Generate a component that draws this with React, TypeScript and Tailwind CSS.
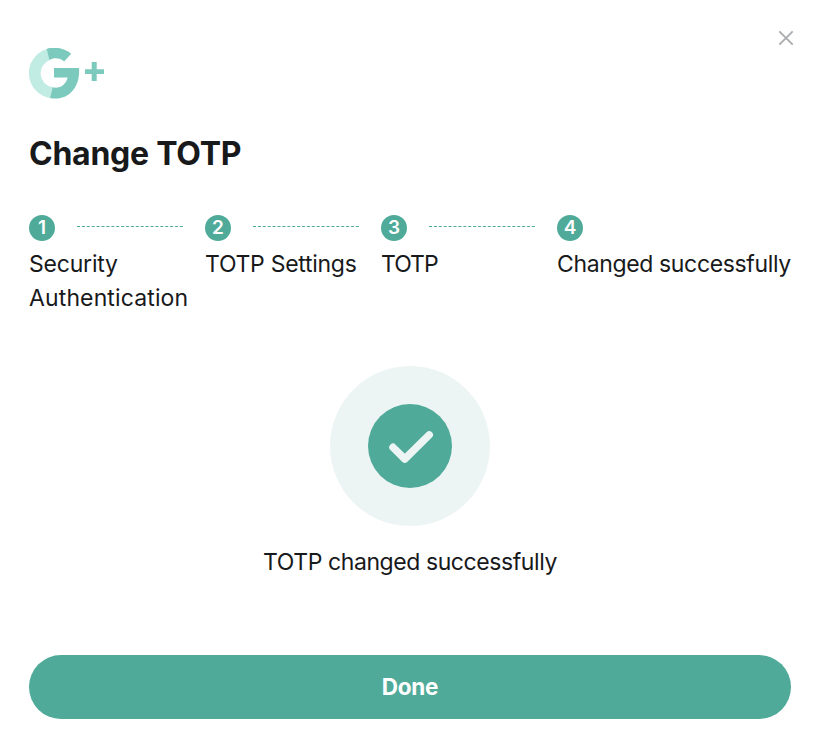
const steps = [
  { lines: [{ text: 'Security', spacing: 'tracking-[-0.2px]' }, { text: 'Authentication', spacing: 'tracking-[0.13px]' }] },
  { lines: [{ text: 'TOTP Settings', spacing: 'tracking-[-0.28px]' }] },
  { lines: [{ text: 'TOTP', spacing: 'tracking-[-1px]' }] },
  { lines: [{ text: 'Changed successfully', spacing: 'tracking-[-0.36px]' }] },
];

function Logo() {
  return (
    <svg width="76" height="51" viewBox="0 0 76 51" className="block" aria-label="G+">
      <path d="M17.9 0.9A25.2 25.2 0 0 0 21 49.9L23.6 39.3A14.2 14.2 0 0 1 21 11.9Z" fill="#c0ece4" />
      <path d="M17.7 0.9C25-1.6 35-.3 42.2 5.7L35.1 13.4C31.5 10.3 25.5 9 20.4 12.1Z" fill="#7bcabd" />
      <path d="M25 20H50C51.5 38.5 40 53.5 21 50L23.6 39.3C31 40.8 36.5 37.3 38.7 29.5H25Z" fill="#7bcabd" />
      <path d="M62.7 14H67.7V21.2H75V26H67.7V33H62.7V26H56V21.2H62.7Z" fill="#7bcabd" />
    </svg>
  );
}

export default function App() {
  return (
    <main className="relative flex h-[754px] w-[824px] flex-col bg-white pt-12 pr-[33px] pl-[29px] font-['Inter','Liberation_Sans',sans-serif] text-[#18191b]">
      <button aria-label="Close" className="absolute top-[30px] right-[30px] flex size-4">
        <svg width="16" height="16" viewBox="0 0 16 16" fill="none" stroke="#a9abae" strokeWidth="1.8">
          <path d="M1.3 1.3L14.7 14.7M14.7 1.3L1.3 14.7" />
        </svg>
      </button>
      <Logo />
      <h1 className="mt-[35px] h-10 text-[32px] leading-10 font-bold tracking-[-0.25px] whitespace-nowrap">Change TOTP</h1>
      <ol className="mt-[41px] flex h-[102px]">
        {steps.map((step, i) => (
          <li key={i} className={i === 3 ? 'w-[234px]' : 'w-44'}>
            <div className="flex h-[26px] items-start">
              <span className="flex size-[26px] items-center justify-center rounded-full bg-[#50aa99] pb-px text-[19px] leading-none font-semibold text-white">
                {i + 1}
              </span>
              {i < 3 && (
                <svg width="106" height="1" className="mt-[11px] ml-[22px]">
                  <path d="M0 .5H106" stroke="#50aa99" strokeDasharray="3 1.9" />
                </svg>
              )}
            </div>
            <p className="mt-1.5 text-[23px] leading-[34px] whitespace-nowrap">
              {step.lines.map((line) => (
                <span key={line.text} className={`block ${line.spacing}`}>{line.text}</span>
              ))}
            </p>
          </li>
        ))}
      </ol>
      <section className="mt-[49px] flex flex-col items-center">
        <div className="flex size-40 items-center justify-center rounded-full bg-[#edf5f4]">
          <div className="flex size-[84px] items-center justify-center rounded-full bg-[#50aa99]">
            <svg width="84" height="84" viewBox="0 0 84 84" fill="none" stroke="#edf5f4" strokeWidth="7.5" strokeLinecap="round" strokeLinejoin="round">
              <path d="M25 43.3L36.8 55L61.2 30.9" />
            </svg>
          </div>
        </div>
        <p className="mt-[19px] text-[23px] leading-[34px] tracking-[-0.42px] whitespace-nowrap">TOTP changed successfully</p>
      </section>
      <button className="mt-19 h-16 w-full rounded-full bg-[#50aa99] text-[22.5px] font-bold tracking-[-0.2px] text-white">Done</button>
    </main>
  );
}
